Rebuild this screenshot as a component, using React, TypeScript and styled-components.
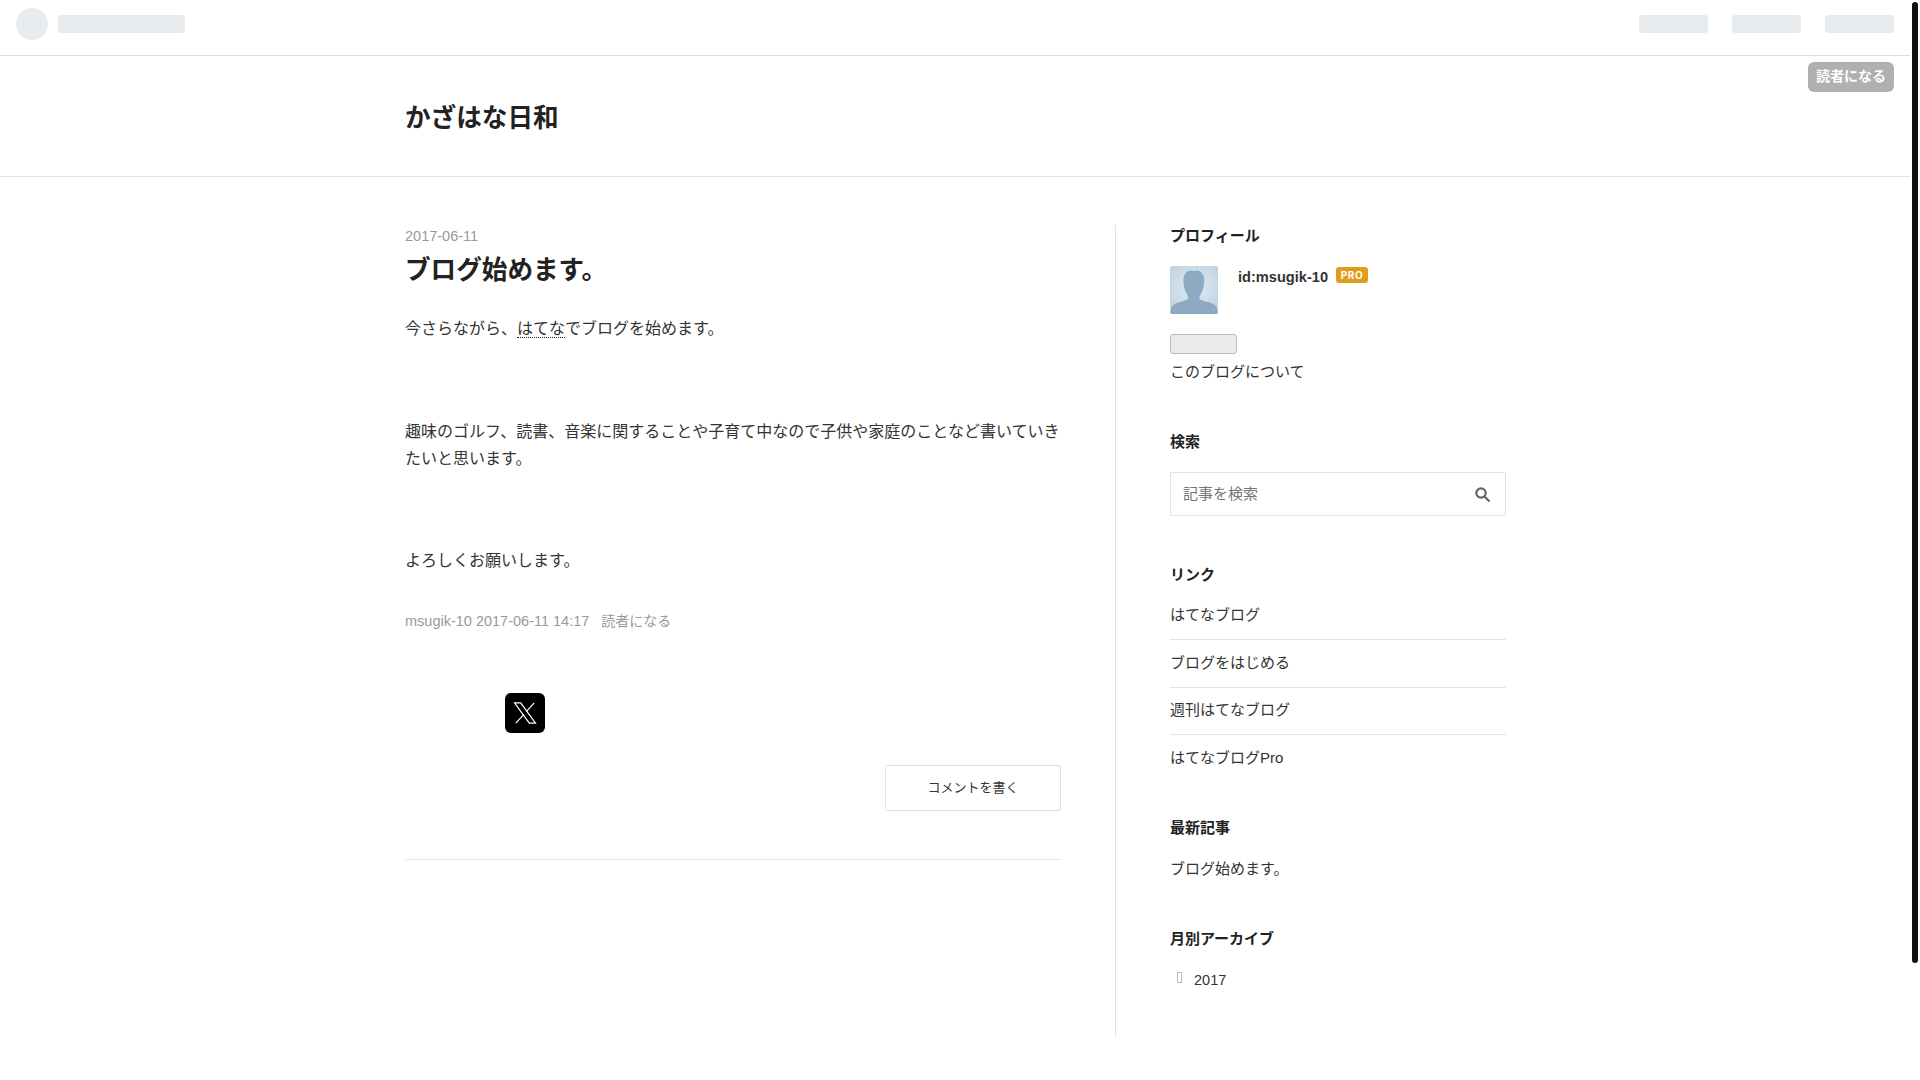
import React from "react";
import styled, { createGlobalStyle } from "styled-components";

const Global = createGlobalStyle`
  html, body { margin: 0; padding: 0; background: #fff; overflow: hidden; }
  body { font-family: "Liberation Sans", "Noto Sans CJK JP", sans-serif; color: #333; }
  p, h1, h2, h3, ul { margin: 0; padding: 0; }
  li { list-style: none; }
`;

const Page = styled.div`
  width: 1910px;
  height: 1080px;
`;

const TopBar = styled.div`
  height: 55px;
  border-bottom: 1px solid #ddd;
  display: flex;
  align-items: flex-start;
  padding: 0 16px;
`;
const Circle = styled.div`
  width: 32px;
  height: 32px;
  margin-top: 8px;
  border-radius: 50%;
  background: #e8ebee;
`;
const SkeletonBar = styled.div<{ $w: number; $ml: number }>`
  width: ${(p) => p.$w}px;
  height: 18px;
  margin-top: 15px;
  margin-left: ${(p) => p.$ml}px;
  border-radius: 3px;
  background: #e8ebee;
`;
const Spacer = styled.div`
  flex: 1;
`;

const BlogHeader = styled.header`
  position: relative;
  height: 120px;
  border-bottom: 1px solid #e4e4e4;
  display: flex;
  align-items: center;
  padding-left: 405px;
`;
const BlogTitle = styled.h1`
  font-size: 25.6px;
  line-height: 36px;
  font-weight: 700;
  color: #222;
  margin-top: 4px;
`;
const FollowButton = styled.div`
  position: absolute;
  right: 16px;
  top: 6px;
  width: 86px;
  height: 30px;
  box-sizing: border-box;
  border-radius: 6px;
  background: #b0b0b0;
  color: #fff;
  font-size: 14px;
  font-weight: 700;
  line-height: 28px;
  text-align: center;
`;

const Content = styled.div`
  display: flex;
  align-items: stretch;
  margin-top: 48px;
  padding-left: 405px;
`;
const Article = styled.article`
  width: 656px;
  margin-right: 54px;
`;
const DateLine = styled.div`
  font-size: 14.5px;
  line-height: 20px;
  color: #999;
  padding-top: 1px;
`;
const EntryTitle = styled.h2`
  font-size: 25.6px;
  line-height: 36px;
  font-weight: 700;
  color: #222;
  margin-top: 6px;
`;
const Body = styled.div`
  margin-top: 27px;
`;
const Para = styled.p<{ $mb: number }>`
  font-size: 16px;
  line-height: 27px;
  color: #333;
  margin-bottom: ${(p) => p.$mb}px;
`;
const Keyword = styled.span`
  border-bottom: 1px dotted #222;
`;
const Meta = styled.div`
  margin-top: 37px;
  font-size: 14.5px;
  line-height: 20px;
  color: #999;
`;
const MetaFollow = styled.span`
  margin-left: 12px;
  font-size: 14px;
`;
const XButton = styled.div`
  margin: 62px 0 0 100px;
  width: 40px;
  height: 40px;
  border-radius: 6px;
  background: #000;
  display: flex;
  align-items: center;
  justify-content: center;
`;
const CommentRow = styled.div`
  margin-top: 32px;
  display: flex;
  justify-content: flex-end;
`;
const CommentButton = styled.div`
  width: 176px;
  height: 46px;
  box-sizing: border-box;
  border: 1px solid #e0e0e0;
  border-radius: 2px;
  font-size: 13px;
  line-height: 44px;
  text-align: center;
  color: #333;
`;
const ArticleRule = styled.div`
  margin-top: 48px;
  border-top: 1px solid #e4e4e4;
`;

const Sidebar = styled.aside`
  width: 336px;
  min-height: 813px;
  border-left: 1px solid #e4e4e4;
  padding-left: 54px;
`;
const Section = styled.section<{ $mt: number }>`
  margin-top: ${(p) => p.$mt}px;
`;
const SideTitle = styled.h3`
  font-size: 15px;
  line-height: 20px;
  padding-top: 1px;
  font-weight: 700;
  color: #222;
`;
const ProfileRow = styled.div`
  margin-top: 20px;
  display: flex;
  align-items: flex-start;
`;
const Avatar = styled.svg`
  width: 48px;
  height: 48px;
  border-radius: 2px;
  display: block;
`;
const UserName = styled.span`
  margin-left: 20px;
  font-size: 14.6px;
  line-height: 22px;
  font-weight: 700;
  color: #333;
`;
const ProBadge = styled.span`
  margin: 1px 0 0 8px;
  width: 32px;
  height: 16px;
  border-radius: 3px;
  background: #e09c1a;
  color: #fff;
  font-family: "Inter", "Liberation Sans", sans-serif;
  font-size: 10px;
  font-weight: 700;
  line-height: 16px;
  letter-spacing: 0.6px;
  text-align: center;
`;
const GreyButton = styled.div`
  margin-top: 20px;
  width: 67px;
  height: 20px;
  box-sizing: border-box;
  border: 1px solid #bbb;
  border-radius: 3px;
  background: #eaeaea;
`;
const SideText = styled.div`
  font-size: 15px;
  line-height: 20px;
  color: #333;
`;
const AboutLink = styled(SideText)`
  margin-top: 8px;
`;
const SearchBox = styled.div`
  margin-top: 20px;
  height: 44px;
  box-sizing: border-box;
  border: 1px solid #e2e2e2;
  display: flex;
  align-items: center;
  justify-content: space-between;
  padding: 0 15px 0 12px;
`;
const SearchHint = styled.span`
  font-size: 15px;
  color: #757575;
  margin-top: -4px;
`;
const LinkList = styled.ul`
  margin-top: 20px;
`;
const LinkItem = styled.li`
  font-size: 15px;
  line-height: 20px;
  color: #333;
  padding: 12.5px 0 14px;
  border-bottom: 1px solid #e4e4e4;
  &:first-child { padding-top: 0; }
  &:last-child { padding-bottom: 0; border-bottom: 0; }
`;
const RecentItem = styled(SideText)`
  margin-top: 21px;
`;
const ArchiveRow = styled.div`
  margin-top: 21px;
  display: flex;
  align-items: center;
  font-size: 14.5px;
  line-height: 20px;
  color: #333;
  padding-left: 7px;
`;
const Tofu = styled.span`
  width: 5px;
  height: 11px;
  box-sizing: border-box;
  border: 1px solid #bbb;
  margin: -4px 12px 0 0;
`;

const ScrollThumb = styled.div`
  position: fixed;
  top: 2px;
  left: 1912px;
  width: 6px;
  height: 961px;
  border-radius: 3px;
  background: #111;
`;

export default function App() {
  return (
    <Page>
      <Global />
      <TopBar>
        <Circle />
        <SkeletonBar $w={127} $ml={10} />
        <Spacer />
        <SkeletonBar $w={69} $ml={0} />
        <SkeletonBar $w={69} $ml={24} />
        <SkeletonBar $w={69} $ml={24} />
      </TopBar>
      <BlogHeader>
        <BlogTitle>かざはな日和</BlogTitle>
        <FollowButton>読者になる</FollowButton>
      </BlogHeader>
      <Content>
        <Article>
          <DateLine>2017-06-11</DateLine>
          <EntryTitle>ブログ始めます。</EntryTitle>
          <Body>
            <Para $mb={76}>
              今さらながら、<Keyword>はてな</Keyword>でブログを始めます。
            </Para>
            <Para $mb={75}>趣味のゴルフ、読書、音楽に関することや子育て中なので子供や家庭のことなど書いていきたいと思います。</Para>
            <Para $mb={0}>よろしくお願いします。</Para>
          </Body>
          <Meta>
            msugik-10 2017-06-11 14:17<MetaFollow>読者になる</MetaFollow>
          </Meta>
          <XButton>
            <svg width="24" height="24" viewBox="0 0 24 24" fill="none" stroke="#fff" strokeWidth="1.200">
              <path d="M1.500 1.800H7.700L22.500 22.200H16.300Z" />
              <path d="M21.200 1.800L13.300 10.700M10.700 13.700L2.800 22.200" />
            </svg>
          </XButton>
          <CommentRow>
            <CommentButton>コメントを書く</CommentButton>
          </CommentRow>
          <ArticleRule />
        </Article>
        <Sidebar>
          <Section $mt={0}>
            <SideTitle>プロフィール</SideTitle>
            <ProfileRow>
              <Avatar viewBox="0 0 48 48">
                <defs>
                  <radialGradient id="avbg" cx="50%" cy="45%" r="65%">
                    <stop offset="0%" stopColor="#e3edf4" />
                    <stop offset="100%" stopColor="#bdd2e2" />
                  </radialGradient>
                </defs>
                <rect width="48" height="48" fill="url(#avbg)" />
                <path
                  fill="#8eaac3"
                  d="M24 5c-2-1-5-.6-7 .8-3 2.2-4 6-3.600 10.500.4 4.500 1.600 9 3.600 12.300 1 1.700 1.600 2.800 1.200 3.800-.5 1.100-3 2-6.500 3.100C8 36.500 2.600 38 1.400 41.500L0 48h48l-1.300-6.500c-1.300-3.500-6.700-5-10.800-6-3.500-1.100-6-2-6.500-3.100-.4-1 .2-2.100 1.200-3.800 2-3.300 3.200-7.800 3.600-12.300C34.600 11.800 33.600 8 30.600 5.800 28.800 4.400 26 4 24 5z"
                />
              </Avatar>
              <UserName>id:msugik-10</UserName>
              <ProBadge>PRO</ProBadge>
            </ProfileRow>
            <GreyButton />
            <AboutLink>このブログについて</AboutLink>
          </Section>
          <Section $mt={49}>
            <SideTitle>検索</SideTitle>
            <SearchBox>
              <SearchHint>記事を検索</SearchHint>
              <svg width="15" height="15" viewBox="0 0 15 15" fill="none" stroke="#666" strokeWidth="2.200">
                <circle cx="6" cy="6" r="4.700" />
                <path d="M9.500 9.500L14 14" strokeLinecap="round" />
              </svg>
            </SearchBox>
          </Section>
          <Section $mt={48}>
            <SideTitle>リンク</SideTitle>
            <LinkList>
              <LinkItem>はてなブログ</LinkItem>
              <LinkItem>ブログをはじめる</LinkItem>
              <LinkItem>週刊はてなブログ</LinkItem>
              <LinkItem>はてなブログPro</LinkItem>
            </LinkList>
          </Section>
          <Section $mt={49}>
            <SideTitle>最新記事</SideTitle>
            <RecentItem>ブログ始めます。</RecentItem>
          </Section>
          <Section $mt={49}>
            <SideTitle>月別アーカイブ</SideTitle>
            <ArchiveRow>
              <Tofu />
              2017
            </ArchiveRow>
          </Section>
        </Sidebar>
      </Content>
      <ScrollThumb />
    </Page>
  );
}
